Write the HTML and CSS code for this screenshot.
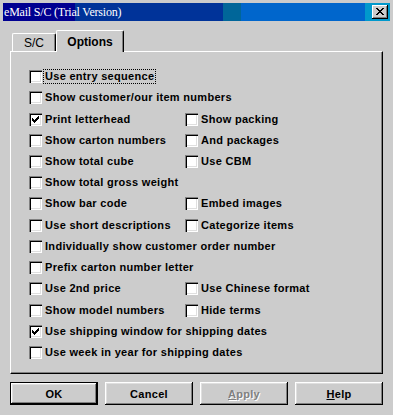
FILE: index.html
```html
<!DOCTYPE html>
<html>
<head>
<meta charset="utf-8">
<link rel="stylesheet" href="styles.css">
</head>
<body>
<div class="window">
  <div class="titlebar">
    <span class="title">eMail S/C (Trial Version)</span>
    <span class="close"><svg width="8" height="7" viewBox="0 0 8 7" shape-rendering="crispEdges"><path d="M0 0h2v1h-2zM6 0h2v1h-2zM1 1h2v1h-2zM5 1h2v1h-2zM2 2h4v1h-4zM3 3h2v1h-2zM2 4h4v1h-4zM1 5h2v1h-2zM5 5h2v1h-2zM0 6h2v1h-2zM6 6h2v1h-2z" fill="#000"/></svg></span>
  </div>
  <div class="content">
    <div class="tabs">
      <div class="tab">S/C</div>
      <div class="tab active">Options</div>
    </div>
    <div class="panel">
      <div class="grid">
        <label class="opt wide"><span class="box"></span><span class="lbl focus">Use entry sequence</span></label>
        <label class="opt wide"><span class="box"></span><span class="lbl">Show customer/our item numbers</span></label>
        <label class="opt"><span class="box checked"></span><span class="lbl">Print letterhead</span></label>
        <label class="opt"><span class="box"></span><span class="lbl">Show packing</span></label>
        <label class="opt"><span class="box"></span><span class="lbl">Show carton numbers</span></label>
        <label class="opt"><span class="box"></span><span class="lbl">And packages</span></label>
        <label class="opt"><span class="box"></span><span class="lbl">Show total cube</span></label>
        <label class="opt"><span class="box"></span><span class="lbl">Use CBM</span></label>
        <label class="opt wide"><span class="box"></span><span class="lbl">Show total gross weight</span></label>
        <label class="opt"><span class="box"></span><span class="lbl">Show bar code</span></label>
        <label class="opt"><span class="box"></span><span class="lbl">Embed images</span></label>
        <label class="opt"><span class="box"></span><span class="lbl">Use short descriptions</span></label>
        <label class="opt"><span class="box"></span><span class="lbl">Categorize items</span></label>
        <label class="opt wide"><span class="box"></span><span class="lbl">Individually show customer order number</span></label>
        <label class="opt wide"><span class="box"></span><span class="lbl">Prefix carton number letter</span></label>
        <label class="opt"><span class="box"></span><span class="lbl">Use 2nd price</span></label>
        <label class="opt"><span class="box"></span><span class="lbl">Use Chinese format</span></label>
        <label class="opt"><span class="box"></span><span class="lbl">Show model numbers</span></label>
        <label class="opt"><span class="box"></span><span class="lbl">Hide terms</span></label>
        <label class="opt wide"><span class="box checked"></span><span class="lbl">Use shipping window for shipping dates</span></label>
        <label class="opt wide"><span class="box"></span><span class="lbl">Use week in year for shipping dates</span></label>
      </div>
    </div>
    <div class="buttons">
      <div class="btn default">OK</div>
      <div class="btn">Cancel</div>
      <div class="btn disabled"><u>A</u>pply</div>
      <div class="btn"><u>H</u>elp</div>
    </div>
  </div>
</div>
</body>
</html>
```

FILE: styles.css
```css
html, body {
  margin: 0;
  padding: 0;
  background: #cccccc;
}
.window {
  width: 393px;
  height: 415px;
  box-sizing: border-box;
  background: #cccccc;
  padding-top: 3px;
  font-family: "Liberation Sans", Arial, sans-serif;
  font-size: 11px;
  color: #000;
}
.titlebar {
  margin: 0 3px;
  height: 18px;
  display: flex;
  align-items: center;
  justify-content: space-between;
  padding: 0 2px 0 1px;
  background: linear-gradient(to right,
    #000091 0, #000091 72px,
    #003399 72px, #003399 220px,
    #006699 220px, #006699 238px,
    #0066cc 238px, #0066cc 362px,
    #0099cc 362px, #0099cc 100%);
}
.title {
  font-family: "Liberation Serif", "Times New Roman", serif;
  font-size: 12px;
  letter-spacing: -0.2px;
  color: #fff;
  white-space: nowrap;
}
.close {
  width: 16px;
  height: 14px;
  box-sizing: border-box;
  background: #cccccc;
  box-shadow: inset -1px -1px 0 #000, inset 1px 1px 0 #fff, inset -2px -2px 0 #808080;
  display: flex;
  align-items: center;
  justify-content: center;
  padding: 0 0 1px 0;
}
.close svg { display: block; }
.content {
  padding: 10px 10px 0 10px;
}
.tabs {
  display: flex;
  align-items: flex-end;
  height: 20px;
  padding-left: 2px;
  position: relative;
  z-index: 1;
}
.tab {
  box-sizing: border-box;
  height: 18px;
  width: 44px;
  background: #cccccc;
  border-left: 1px solid #fff;
  border-top: 1px solid #fff;
  border-right: 1px solid #000;
  border-top-left-radius: 2px;
  border-top-right-radius: 2px;
  box-shadow: inset -1px 0 0 #808080;
  text-align: center;
  line-height: 16px;
  font-size: 12px;
  padding-top: 1px;
}
.tab.active {
  width: 68px;
  height: 22px;
  margin-bottom: -1px;
  font-weight: bold;
  line-height: 18px;
  padding-top: 2px;
}
.panel {
  box-sizing: border-box;
  height: 323px;
  border-top: 1px solid #fff;
  border-left: 1px solid #fff;
  border-right: 1px solid #000;
  border-bottom: 1px solid #000;
  box-shadow: inset -1px -1px 0 #808080;
  padding: 14px 0 0 18px;
}
.grid {
  display: grid;
  grid-template-columns: 156px auto;
  grid-auto-rows: 21.23px;
}
.opt {
  display: flex;
  align-items: center;
  white-space: nowrap;
  font-weight: bold;
  font-size: 11px;
  letter-spacing: 0.3px;
}
.opt.wide { grid-column: 1 / -1; }
.box {
  width: 13px;
  height: 13px;
  box-sizing: border-box;
  background: #fff;
  flex: none;
  box-shadow: inset 1px 1px 0 #808080, inset 2px 2px 0 #000, inset -1px -1px 0 #fff, inset -2px -2px 0 #dfdfdf;
  position: relative;
}
.box.checked::after {
  content: "";
  position: absolute;
  left: 3px;
  top: 3px;
  width: 7px;
  height: 7px;
  background: url("data:image/svg+xml;utf8,<svg xmlns='http://www.w3.org/2000/svg' width='7' height='7' viewBox='0 0 7 7' shape-rendering='crispEdges'><path d='M6 0h1v1h-1zM5 1h2v1h-2zM0 2h1v1h-1zM4 2h3v1h-3zM0 3h2v1h-2zM3 3h3v1h-3zM0 4h5v1h-5zM1 5h3v1h-3zM2 6h1v1h-1z' fill='black'/></svg>") no-repeat;
}
.lbl {
  margin-left: 1px;
  padding: 0 1px;
  line-height: 13px;
  border: 1px solid transparent;
}
.lbl.focus {
  border: 1px dotted #000;
}
.buttons {
  display: flex;
  gap: 7px;
  margin-top: 8px;
}
.btn {
  width: 88px;
  height: 23px;
  box-sizing: border-box;
  background: #cccccc;
  box-shadow: inset -1px -1px 0 #000, inset 1px 1px 0 #fff, inset -2px -2px 0 #808080, inset 2px 2px 0 #dfdfdf;
  display: flex;
  align-items: center;
  justify-content: center;
  font-weight: bold;
  font-size: 11px;
  letter-spacing: 0.3px;
}
.btn.default {
  border: 1px solid #000;
}
.btn.disabled {
  color: #808080;
  text-shadow: 1px 1px 0 #fff;
}
.btn u { text-decoration: underline; }
```
